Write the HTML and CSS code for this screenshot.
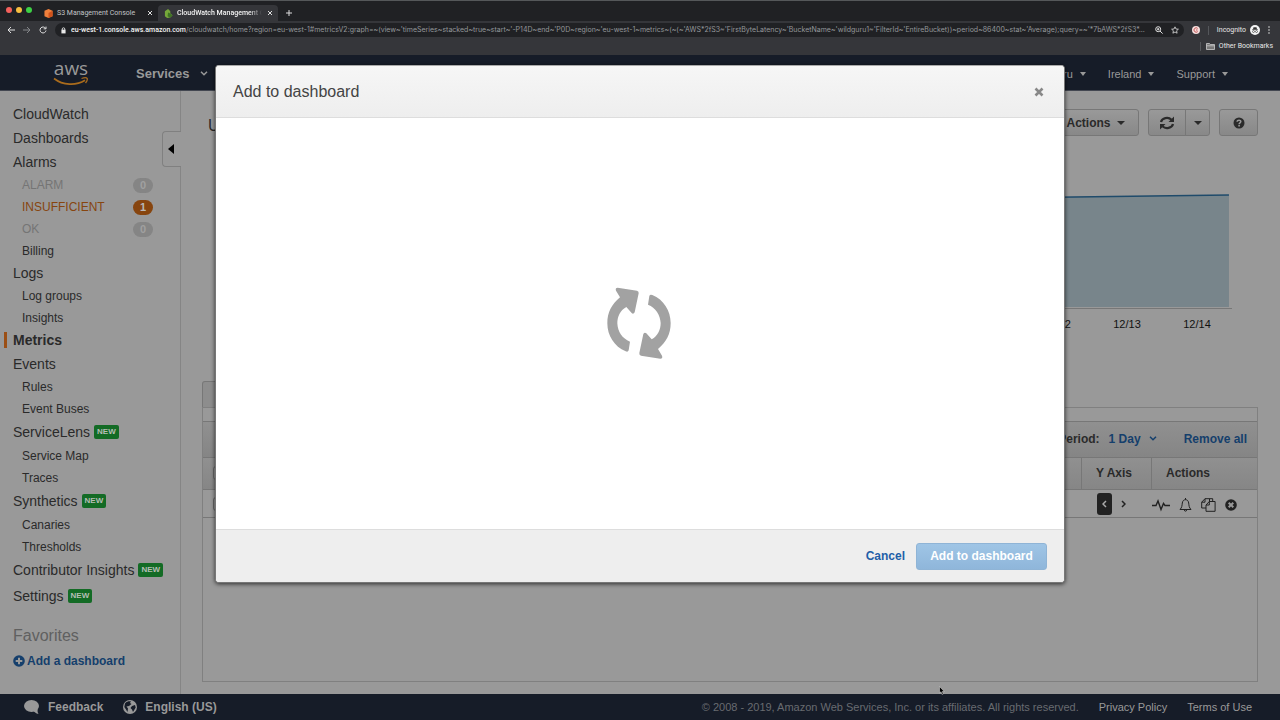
FILE: index.html
```html
<!DOCTYPE html>
<html lang="en">
<head>
<meta charset="utf-8">
<title>CloudWatch Management Console</title>
<link rel="stylesheet" href="styles.css">
</head>
<body>
<div class="browser">
  <div class="tabstrip">
    <div class="lights"><i class="light red"></i><i class="light yellow"></i><i class="light green"></i></div>
    <div class="tab">
      <svg class="favicon" viewBox="0 0 10 10"><path fill="#f0803c" d="M5 0l4.500 2v6L5 10 .5 8V2z"/><path fill="#d0521c" d="M5 4.500l4.500-2.500v6L5 10z"/></svg>
      <span class="tab-title">S3 Management Console</span>
      <button class="tab-close" aria-label="Close tab"><svg viewBox="0 0 6 6"><path d="M1 1l4 4M5 1L1 5"/></svg></button>
    </div>
    <div class="tab active">
      <svg class="favicon" viewBox="0 0 10 10"><path fill="#76a83a" d="M1 2.500L4.500 0 7 2.500V5l2.500 2L7 9.500 3.500 10 1 8z"/><path fill="#3f7424" d="M4.500 4L7 5l2.500 2.500L6.500 9.500 4 8z"/></svg>
      <span class="tab-title">CloudWatch Management Console</span>
      <button class="tab-close" aria-label="Close tab"><svg viewBox="0 0 6 6"><path d="M1 1l4 4M5 1L1 5"/></svg></button>
    </div>
    <button class="new-tab" aria-label="New tab"><svg viewBox="0 0 6 6"><path d="M3 0v6M0 3h6"/></svg></button>
  </div>
  <div class="toolbar">
    <button class="tool" aria-label="Back"><svg viewBox="0 0 8 8"><path d="M8 4H1.200M4 1L1 4l3 3"/></svg></button>
    <button class="tool faded" aria-label="Forward"><svg viewBox="0 0 8 8"><path d="M0 4h6.800M4 1l3 3-3 3"/></svg></button>
    <button class="tool" aria-label="Reload"><svg viewBox="0 0 8 8"><path d="M6.600 2.400A3 3 0 1 0 7 4.500M7 .6v2.200H4.700"/></svg></button>
    <div class="address">
      <svg class="lock" viewBox="0 0 6 8"><path fill="#e8e8e8" d="M.5 3h5v4.500h-5z"/><path fill="none" stroke="#e8e8e8" d="M1.500 3.500V2.200a1.500 1.500 0 0 1 3 0v1.300"/></svg>
      <div class="url"><b>eu-west-1.console.aws.amazon.com</b>/cloudwatch/home?region=eu-west-1#metricsV2:graph=~(view~'timeSeries~stacked~true~start~'-P14D~end~'P0D~region~'eu-west-1~metrics~(~(~'AWS*2fS3~'FirstByteLatency~'BucketName~'wildguru1~'FilterId~'EntireBucket))~period~86400~stat~'Average);query=~'*7bAWS*2fS3*...</div>
      <button class="tool" aria-label="Zoom"><svg viewBox="0 0 8 8"><circle cx="3.200" cy="3.200" r="2.500"/><path d="M5 5l2.600 2.600M2 3.200h2.400M3.200 2v2.400"/></svg></button>
      <button class="tool" aria-label="Bookmark"><svg viewBox="0 0 8 8"><path stroke-width=".8" d="M4 .8l1 2.200 2.400.2-1.800 1.600.5 2.400L4 6 1.900 7.200l.5-2.400L.6 3.200 3 3z"/></svg></button>
    </div>
    <svg class="extension" viewBox="0 0 8 8"><circle cx="4" cy="4" r="4" fill="#f4dedd"/><path fill="none" stroke="#c75757" stroke-width="1" d="M5.700 2.400a2.200 2.200 0 1 0 0 3.200M5.500 4H4"/></svg>
    <span class="divider"></span>
    <span class="incognito">Incognito</span>
    <svg class="spy" viewBox="0 0 10 10"><circle cx="5" cy="5" r="5" fill="#f4f4f4"/><path fill="#333" d="M3.500 2.200h3l.5 2h1v.6H2v-.6h1z"/><circle cx="3.500" cy="6.500" r="1" fill="none" stroke="#333" stroke-width=".6"/><circle cx="6.500" cy="6.500" r="1" fill="none" stroke="#333" stroke-width=".6"/></svg>
    <svg class="dots" viewBox="0 0 2 8"><circle cx="1" cy="1" r=".8"/><circle cx="1" cy="4" r=".8"/><circle cx="1" cy="7" r=".8"/></svg>
  </div>
  <div class="bookmarks">
    <span class="divider"></span>
    <svg class="folder" viewBox="0 0 9 7"><path fill="#777" stroke="#ccc" stroke-width=".8" d="M.5 6.500v-6h3l.7 1h4.300v5zM.5 2.800h8"/></svg>
    <span>Other Bookmarks</span>
  </div>
</div>

<div class="app">
  <header class="topnav">
    <a class="logo" href="#" aria-label="AWS home">
      <span class="logo-text">aws</span>
      <svg viewBox="0 0 36 9"><path fill="none" stroke="#a96b1c" stroke-width="1.700" d="M1 1.500C10 8.500 23 9 32 3.300"/><path fill="none" stroke="#a96b1c" stroke-width="1.300" d="M28.500 1.500c3-1 5-1 5.600-.2.500.8-.3 3-1.600 4.700"/></svg>
    </a>
    <button class="nav-services">Services <svg class="chev" viewBox="0 0 8 5"><path d="M1 .8l3 3 3-3"/></svg></button>
    <nav class="nav-right">
      <button class="nav-item">wildguru <i class="caret"></i></button>
      <button class="nav-item">Ireland <i class="caret"></i></button>
      <button class="nav-item">Support <i class="caret"></i></button>
    </nav>
  </header>

  <div class="body">
    <aside class="sidebar">
      <button class="collapse" aria-label="Collapse sidebar"><svg viewBox="0 0 6 10"><path d="M6 0v10L0 5z"/></svg></button>
      <nav>
        <ul class="menu">
          <li><a href="#">CloudWatch</a></li>
          <li><a href="#">Dashboards</a></li>
          <li><a href="#">Alarms</a>
            <ul>
              <li class="muted"><a href="#">ALARM</a><span class="count">0</span></li>
              <li class="warn"><a href="#">INSUFFICIENT</a><span class="count">1</span></li>
              <li class="muted"><a href="#">OK</a><span class="count">0</span></li>
              <li><a href="#">Billing</a></li>
            </ul></li>
          <li><a href="#">Logs</a>
            <ul><li><a href="#">Log groups</a></li><li><a href="#">Insights</a></li></ul></li>
          <li class="current"><a href="#">Metrics</a></li>
          <li><a href="#">Events</a>
            <ul><li><a href="#">Rules</a></li><li><a href="#">Event Buses</a></li></ul></li>
          <li class="fresh"><a href="#">ServiceLens <span class="new">NEW</span></a>
            <ul><li><a href="#">Service Map</a></li><li><a href="#">Traces</a></li></ul></li>
          <li class="fresh"><a href="#">Synthetics <span class="new">NEW</span></a>
            <ul><li><a href="#">Canaries</a></li><li><a href="#">Thresholds</a></li></ul></li>
          <li class="fresh"><a href="#">Contributor Insights <span class="new">NEW</span></a></li>
          <li class="fresh"><a href="#">Settings <span class="new">NEW</span></a></li>
        </ul>
      </nav>
      <h2 class="fav-title">Favorites</h2>
      <a class="add-link" href="#"><svg viewBox="0 0 12 12"><circle cx="6" cy="6" r="5.800" fill="#153f6c"/><path stroke="#999" stroke-width="2" d="M6 2.700v6.600M2.700 6h6.600"/></svg>Add a dashboard</a>
    </aside>

    <main class="main">
      <div class="graph-head">
        <h1>Untitled graph</h1>
        <div class="btns">
          <button class="btn actions">Actions <i class="caret"></i></button>
          <div class="split">
            <button class="btn" aria-label="Refresh"><svg class="refresh" viewBox="0 0 16 14"><path fill="none" stroke="#2a2a2a" stroke-width="2.200" d="M2 6a6 5 0 0 1 10.500-2.300M14 8a6 5 0 0 1-10.500 2.300"/><path fill="#2a2a2a" d="M15 .5V6H9.500zM1 13.500V8h5.500z"/></svg></button>
            <button class="btn" aria-label="Refresh options"><i class="caret"></i></button>
          </div>
          <button class="btn help" aria-label="Help"><svg viewBox="0 0 12 12"><circle cx="6" cy="6" r="5.500" fill="#2a2a2a"/><path fill="none" stroke="#999" stroke-width="1.500" d="M4 4.800C4.200 2.600 8 2.700 7.800 4.800 7.700 6 6.100 5.900 6.100 7.300"/><path fill="#999" d="M5.300 8h1.600v1.500H5.300z"/></svg></button>
        </div>
      </div>
      <div class="chart">
        <svg class="plot" viewBox="0 0 1000 115" preserveAspectRatio="none"><path fill="#78858b" d="M0 14L997 1v113H0z"/><path fill="none" stroke="#1f4b6b" stroke-width="1.500" vector-effect="non-scaling-stroke" d="M0 14L997 1"/></svg>
        <div class="ticks"><span>12/12</span><span>12/13</span><span>12/14</span></div>
      </div>
      <div class="panel-tab"></div>
      <section class="panel">
        <div class="panel-strip"></div>
        <div class="panel-tools"><span>Period:</span><button class="link">1 Day <svg class="chev" viewBox="0 0 8 5"><path d="M1 .8l3 3 3-3"/></svg></button><button class="link remove">Remove all</button></div>
        <table class="metrics">
          <thead><tr><th><input type="checkbox" checked aria-label="Select all"></th><th class="col-y">Y Axis</th><th class="col-act">Actions</th></tr></thead>
          <tbody><tr>
            <td><input type="checkbox" checked aria-label="Select metric"></td>
            <td class="col-y"><div class="axis"><button class="axis-btn on" aria-label="Left axis"><svg viewBox="0 0 5 8"><path d="M4 1L1 4l3 3"/></svg></button><button class="axis-btn" aria-label="Right axis"><svg viewBox="0 0 5 8"><path d="M1 1l3 3-3 3"/></svg></button></div></td>
            <td class="col-act"><div class="row-icons">
              <button aria-label="Metric math"><svg width="18" height="14" viewBox="0 0 18 14"><path stroke-width="1.400" d="M0 7.500h4l2-4.500 3 8.500 2.500-6 1.500 2h5"/></svg></button>
              <button aria-label="Create alarm"><svg width="13" height="14" viewBox="0 0 13 14"><path d="M1 11.500c2-2 2-4 2.300-6.500C3.700 2.500 5 1.700 6.500 1.700S9.300 2.500 9.700 5c.3 2.500.3 4.500 2.300 6.500zM5.300 12c.2 1.600 2.200 1.600 2.400 0M6.500 0v1.700"/></svg></button>
              <button aria-label="Duplicate"><svg width="15" height="14" viewBox="0 0 15 14"><path d="M5 10H.7V4.200L4 .7h4.500V4M4 .7v3.500H.7M5 13.300V7l3.300-3.500h5.800v9.800zM8.300 3.500V7H5M8.500 3.500V.7h3.200v2.800"/></svg></button>
              <button aria-label="Remove"><svg width="12" height="12" viewBox="0 0 12 12"><circle cx="6" cy="6" r="5.800" fill="#222" stroke="none"/><path stroke="#999" stroke-width="2" d="M3.700 3.700l4.600 4.600M8.300 3.700L3.700 8.300"/></svg></button>
            </div></td>
          </tr></tbody>
        </table>
      </section>
    </main>
  </div>

  <footer class="footer">
    <a class="strong" href="#"><svg width="16" height="14" viewBox="0 0 16 14"><ellipse cx="7.500" cy="6" rx="7.500" ry="6"/><path d="M9 10c1 2 3 3.500 5.500 4-1-1.500-1-3-.8-5z"/></svg>Feedback</a>
    <a class="strong" href="#"><svg width="14" height="14" viewBox="0 0 14 14"><circle cx="7" cy="7" r="7"/><path fill="#161c28" d="M2 3.500C4 1 6 1.200 8 1.300L7 3l1.500 1L6 6 3.500 6.500 5 8.500 4.500 12 3 9.500 1.300 7zM9 6l3-1 .7 2.500L10 12 9 9.500 7.500 8z"/></svg>English (US)</a>
    <span class="copy">© 2008 - 2019, Amazon Web Services, Inc. or its affiliates. All rights reserved.</span>
    <a href="#">Privacy Policy</a>
    <a href="#">Terms of Use</a>
  </footer>

  <div class="overlay">
    <div class="modal" role="dialog" aria-modal="true" aria-labelledby="modal-title">
      <div class="modal-head"><h2 id="modal-title">Add to dashboard</h2>
        <button class="modal-close" aria-label="Close"><svg viewBox="0 0 10 10"><path d="M1.500 1.500l7 7M8.500 1.500l-7 7"/></svg></button></div>
      <div class="modal-body">
        <svg class="spinner" viewBox="52 52 192 216"><path id="arrow" d="M84 54L142 63Q148 65 147 71L135 128Q131 135 126 130L110 112C91 122 83 142 83 161C84 186 98 207 121 216L117 242Q115 248 108 245C74 231 53 198 53 161C53 128 66 104 91 83L79 63Q76 54 84 54Z"/><use href="#arrow" transform="rotate(180 148 160.500)"/></svg>
      </div>
      <div class="modal-foot"><button class="cancel">Cancel</button><button class="primary" disabled>Add to dashboard</button></div>
    </div>
  </div>
</div>
<svg class="cursor" viewBox="0 0 6 9"><path fill="#000" stroke="#ddd" stroke-width=".5" d="M.5.500v6.500l1.500-1.200L3 8.500l1.300-.5-1-2.500h2z"/></svg>
</body>
</html>
```
FILE: styles.css
```css
* { box-sizing: border-box; }
body {
  margin: 0;
  min-height: 100vh;
  display: flex;
  flex-direction: column;
  background: #999;
  color: #2a2a2a;
  font: 12px/16px "Liberation Sans", Arial, sans-serif;
}
button { margin: 0; padding: 0; border: 0; background: none; color: inherit; font: inherit; }
a { color: inherit; text-decoration: none; }
ul { margin: 0; padding: 0; list-style: none; }
h1, h2 { margin: 0; font-weight: normal; }
svg { display: block; flex: none; }

/* Browser window */
.browser { background: #35363a; color: #e8e8e8; font: 7px/10px Roboto, sans-serif; }
.tabstrip { display: flex; align-items: flex-end; height: 21px; background: #202124; border-top: 1px solid #55585a; }
.lights { display: flex; gap: 4px; padding: 0 0 8px 6px; width: 38px; }
.light { width: 6px; height: 6px; border-radius: 50%; }
.red { background: #f4605c; }
.yellow { background: #f8be40; }
.green { background: #3dd145; }
.tab { display: flex; align-items: center; width: 120px; height: 16px; padding: 0 5px 0 6px; border-radius: 4px 4px 0 0; color: #c2c4c6; }
.tab.active { background: #35363a; color: #f2f2f2; font-weight: 500; }
.favicon { width: 9px; height: 9px; margin-right: 4px; }
.tab-title { flex: 1; overflow: hidden; white-space: nowrap; }
.active .tab-title { mask-image: linear-gradient(90deg, #000 85%, transparent); }
.tab-close, .new-tab { margin-left: 5px; }
.tab-close svg, .new-tab svg { width: 6px; height: 6px; }
.new-tab { padding: 0 0 5px 3px; }
.tab-close path, .new-tab path { stroke: #ddd; fill: none; }
.toolbar { display: flex; align-items: center; height: 18px; padding: 0 10px 0 7px; gap: 8px; }
.tool svg { width: 8px; height: 8px; fill: none; stroke: #e0e0e0; }
.tool.faded svg { stroke: #85878a; }
.address { display: flex; align-items: center; gap: 8px; flex: 1; min-width: 0; height: 14px; padding: 0 5px; border-radius: 7px; background: #202124; }
.lock { width: 5px; height: 7px; margin-left: 1px; }
.url { flex: 1; min-width: 0; margin-left: -3px; overflow: hidden; white-space: nowrap; color: #95989b; font-family: Inter, sans-serif; }
.url b { font-family: Roboto, sans-serif; font-weight: 500; color: #f4f4f4; }
.extension { width: 8px; height: 8px; }
.divider { width: 1px; height: 9px; background: #55575b; }
.incognito { margin-right: -4px; }
.spy { width: 10px; height: 10px; }
.dots { width: 2px; height: 8px; fill: #ddd; }
.bookmarks { display: flex; align-items: center; justify-content: flex-end; gap: 4px; height: 16px; padding: 0 7px 2px 0; }
.folder { width: 9px; height: 7px; margin-left: 1px; }

/* Console frame */
.app { position: relative; flex: 1; display: flex; flex-direction: column; }
.topnav { display: flex; align-items: center; height: 36px; padding: 2px 52px 0 53px; background: #161c28; color: #999; border-bottom: 1px solid #434751; }
.logo { display: flex; flex-direction: column; width: 36px; margin-right: 47px; }
.logo-text { font: 19px/15px "Open Sans", sans-serif; text-align: center; }
.logo svg { width: 36px; height: 9px; margin-top: 1px; }
.nav-services { display: flex; align-items: center; gap: 10px; font-size: 13px; font-weight: bold; }
.chev { width: 8px; height: 5px; fill: none; stroke: currentColor; stroke-width: 1.5; }
.nav-right { display: flex; gap: 22px; margin-left: auto; font-size: 11px; }
.nav-item { display: flex; align-items: center; gap: 7px; }
.caret { display: inline-block; border: 4px solid transparent; border-top-color: currentColor; border-bottom: 0; }
.nav-item .caret { border-width: 4px 3px 0; }
.body { flex: 1; display: flex; }

/* Sidebar */
.sidebar { position: relative; width: 181px; flex: none; padding: 11px 4px; border-right: 1px solid #858585; }
.collapse { position: absolute; left: 162px; top: 40px; width: 19px; height: 36px; padding-left: 5px; background: #999; border: 1px solid #808080; border-right: 0; border-radius: 4px 0 0 4px; }
.collapse svg { width: 6px; height: 10px; fill: #000; }
.menu > li > a { display: flex; align-items: center; gap: 4px; height: 24px; padding-left: 9px; font-size: 14px; }
.menu > .fresh > a { height: 26px; }
.menu > .current > a { position: relative; font-weight: bold; }
.current > a::before { content: ""; position: absolute; left: 0; top: 4px; width: 3px; height: 16px; background: #9b4f15; }
.menu ul { margin-bottom: -1px; padding: 0 23px 0 18px; }
.menu ul li { display: flex; align-items: center; justify-content: space-between; height: 22px; }
.muted { color: #757575; }
.warn { color: #87450f; }
.count { width: 20px; height: 15px; border-radius: 8px; background: #858585; color: #a0a0a0; font-size: 11px; line-height: 15px; font-weight: bold; text-align: center; }
.warn .count { background: #87450f; color: #b8b8b8; }
.new { padding: 0 3px; height: 14px; border-radius: 2px; background: #136b25; color: #b5bdb5; font-size: 8px; line-height: 14px; font-weight: bold; }
.fav-title { margin: 17px 0 0 9px; color: #606060; font-size: 16px; line-height: 20px; }
.add-link { display: flex; align-items: center; gap: 2px; margin: 7px 0 0 9px; color: #153f6c; font-weight: bold; }
.add-link svg { width: 12px; height: 12px; }

/* Graph */
.main { flex: 1; min-width: 0; display: flex; flex-direction: column; padding: 18px 22px 12px 21px; }
.graph-head { display: flex; align-items: center; justify-content: space-between; height: 27px; }
.graph-head h1 { padding: 6px 0 0 6px; font-size: 16px; line-height: 20px; }
.btns { display: flex; gap: 9px; }
.btn { display: flex; align-items: center; justify-content: center; height: 27px; border: 1px solid #777; border-radius: 3px; background: linear-gradient(#999, #888); font-weight: bold; }
.actions { width: 90px; gap: 6px; padding-left: 3px; }
.split { display: flex; }
.split .btn:first-child { width: 38px; border-radius: 3px 0 0 3px; }
.split .btn:last-child { width: 25px; margin-left: -1px; border-radius: 0 3px 3px 0; }
.refresh { width: 16px; height: 14px; }
.help { width: 39px; }
.help svg { width: 12px; height: 12px; }
.chart { margin: 58px 26px 0 20px; }
.plot { width: 100%; height: 115px; border-bottom: 1px solid #777; }
.ticks { display: flex; justify-content: flex-end; padding-top: 7px; font-size: 11px; line-height: 16px; color: #111; }
.ticks span { width: 70px; text-align: center; }

/* Graphed metrics */
.panel-tab { width: 110px; height: 26px; margin-top: 49px; border: 1px solid #777; border-bottom: 0; border-radius: 3px 3px 0 0; background: #8d8d8d; }
.panel { flex: 1; border: 1px solid #808080; }
.panel-strip { height: 14px; border-bottom: 1px solid #777; }
.panel-tools { display: flex; align-items: center; justify-content: flex-end; gap: 9px; height: 35px; padding: 0 10px 2px 0; background: linear-gradient(#909090, #858585); font-weight: bold; }
.link { display: flex; align-items: center; gap: 8px; color: #153f6c; }
.remove { margin-left: 18px; }
.metrics { width: 100%; border-collapse: separate; border-spacing: 0; table-layout: fixed; }
.metrics th { height: 33px; padding: 0 10px 2px; border: 0 solid #777; border-width: 1px 0; background: linear-gradient(#909090, #868686); text-align: left; font-weight: bold; }
.metrics td { height: 28px; padding: 0 10px; border-bottom: 1px solid #777; }
.metrics th.col-y, .metrics th.col-act { border-left-width: 1px; }
.metrics .col-y { width: 70px; padding-left: 14px; padding-right: 0; }
.metrics .col-act { width: 106px; padding-left: 14px; }
.metrics td.col-y { padding-left: 16px; }
.metrics td.col-act { padding: 2px 0 0 1px; }
.metrics input { appearance: none; display: block; width: 14px; height: 14px; margin: 0; border: 1px solid #666; border-radius: 3px; background: #999; }
.axis { display: flex; align-items: center; }
.axis-btn { display: flex; align-items: center; justify-content: center; width: 22px; height: 22px; }
.axis-btn svg { width: 5px; height: 8px; fill: none; stroke: #222; stroke-width: 1.5; }
.axis-btn.on { width: 15px; border-radius: 3px; background: #222; }
.axis-btn.on svg { stroke: #aaa; }
.row-icons { display: flex; align-items: center; gap: 9px; }
.row-icons svg { fill: none; stroke: #222; }

/* Footer */
.footer { display: flex; align-items: center; height: 26px; padding: 0 28px 0 24px; gap: 20px; background: #161c28; color: #999; font-size: 11px; }
.footer svg { fill: #999; }
.strong { display: flex; align-items: center; gap: 8px; font-size: 12px; font-weight: bold; }
.copy { margin-left: auto; color: #686b70; }

/* Dialog */
.overlay { position: absolute; inset: 0; display: flex; justify-content: center; align-items: flex-start; padding-top: 10px; }
.modal { width: 850px; max-width: 96%; border: 1px solid #777; border-top-color: #aaa; border-radius: 4px; background: #fff; box-shadow: 0 1px 4px rgba(0, 0, 0, .7); overflow: hidden; }
.modal-head { display: flex; align-items: center; justify-content: space-between; height: 52px; padding: 0 20px 0 17px; background: linear-gradient(#f6f6f6, #eee); border-bottom: 1px solid #ddd; color: #444; }
.modal-head h2 { font-size: 16px; line-height: 20px; }
.modal-close svg { width: 10px; height: 10px; fill: none; stroke: #888; stroke-width: 2.6; }
.modal-body { display: flex; align-items: center; justify-content: center; min-height: 411px; padding: 0 2px 1px 0; }
.spinner { width: 64px; height: 72px; fill: #a2a2a2; }
.modal-foot { display: flex; align-items: center; justify-content: flex-end; gap: 11px; height: 53px; padding-right: 17px; background: #eee; border-top: 1px solid #ddd; font-weight: bold; }
.cancel { color: #1f5fa8; }
.primary { width: 131px; height: 27px; border: 1px solid #8fb4d6; border-radius: 3px; background: linear-gradient(#9fc5e6, #8fb6da); color: #fff; }
.cursor { position: absolute; left: 939px; top: 686px; width: 6px; height: 9px; }
```
